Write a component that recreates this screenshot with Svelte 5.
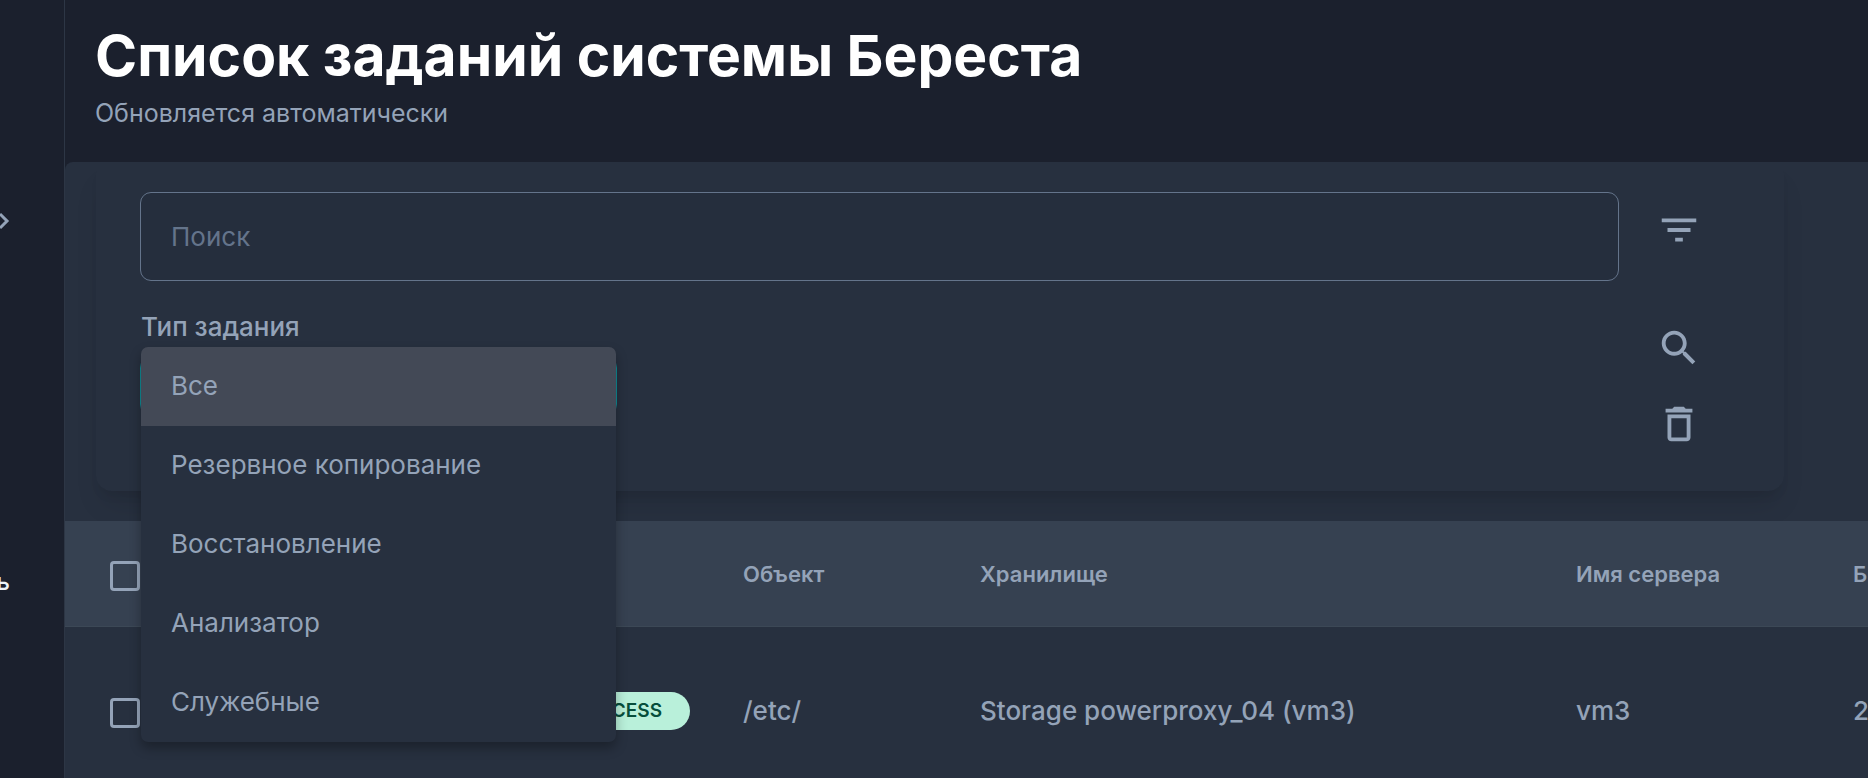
<script>
  const options = ['Все', 'Резервное копирование', 'Восстановление', 'Анализатор', 'Служебные'];
  let type = $state('Все');
  let query = $state('');
</script>

<div class="app">
  <aside class="sidebar">
    <button class="nav-item" aria-label="Развернуть">
      <svg viewBox="0 0 10 18" width="10" height="18" aria-hidden="true">
        <path d="M0 2 7 9 0 16" />
      </svg>
    </button>
    <span class="nav-text">ь</span>
  </aside>

  <main>
    <header>
      <h1>Список заданий системы Береста</h1>
      <p>Обновляется автоматически</p>
    </header>

    <section class="panel">
      <form class="filters" onsubmit={(e) => e.preventDefault()}>
        <div class="fields">
          <input class="search" type="text" placeholder="Поиск" aria-label="Поиск" bind:value={query} />
          <span class="label" id="type-label">Тип задания</span>
          <div class="select">
            <button type="button" class="select-box" aria-haspopup="listbox" aria-labelledby="type-label"></button>
            <div class="menu" role="listbox" aria-labelledby="type-label">
              {#each options as option}
                <button
                  type="button"
                  role="option"
                  aria-selected={option === type}
                  class:selected={option === type}
                  onclick={() => (type = option)}>{option}</button>
              {/each}
            </div>
          </div>
        </div>
        <div class="actions">
          <button type="button" class="filter" aria-label="Фильтр">
            <svg viewBox="0 0 24 24"><path d="M10 18h4v-2h-4v2zM3 6v2h18V6H3zm3 7h12v-2H6v2z" /></svg>
          </button>
          <button type="submit" aria-label="Найти">
            <svg viewBox="0 0 24 24"><path d="M15.5 14h-.79l-.28-.27C15.41 12.59 16 11.11 16 9.5 16 5.91 13.09 3 9.5 3S3 5.91 3 9.5 5.91 16 9.5 16c1.61 0 3.09-.59 4.23-1.57l.27.28v.79l5 4.99L20.49 19l-4.99-5zm-6 0C7.01 14 5 11.99 5 9.5S7.01 5 9.5 5 14 7.01 14 9.5 11.99 14 9.5 14z" /></svg>
          </button>
          <button type="reset" aria-label="Очистить">
            <svg viewBox="0 0 24 24"><path d="M6 19c0 1.1.9 2 2 2h8c1.1 0 2-.9 2-2V7H6v12zM8 9h8v10H8V9zm7.5-5-1-1h-5l-1 1H5v2h14V4h-3.5z" /></svg>
          </button>
        </div>
      </form>

      <table>
        <colgroup>
          <col class="c-check" /><col class="c-status" /><col class="c-object" />
          <col class="c-storage" /><col class="c-server" /><col />
        </colgroup>
        <thead>
          <tr>
            <th><input type="checkbox" aria-label="Выбрать все" /></th>
            <th></th>
            <th>Объект</th>
            <th>Хранилище</th>
            <th>Имя сервера</th>
            <th>Б</th>
          </tr>
        </thead>
        <tbody>
          <tr>
            <td><input type="checkbox" aria-label="Выбрать задание" /></td>
            <td class="status"><span class="badge">SUCCESS</span></td>
            <td>/etc/</td>
            <td>Storage powerproxy_04 (vm3)</td>
            <td>vm3</td>
            <td>2</td>
          </tr>
        </tbody>
      </table>
    </section>
  </main>
</div>

<style>
  :global(body) {
    margin: 0;
    background: #1b202d;
  }
  .app {
    display: flex;
    height: 100vh;
    overflow: hidden;
    background: #1b202d;
    color: #94a3b8;
    font-family: Inter, sans-serif;
    font-size: 26px;
    line-height: 40px;
  }
  button {
    margin: 0;
    border: 0;
    padding: 0;
    background: none;
    color: inherit;
    font: inherit;
    cursor: pointer;
  }
  .sidebar {
    flex: none;
    box-sizing: border-box;
    width: 65px;
    padding-top: 212px;
    border-right: 1px solid #2d3645;
    display: flex;
    flex-direction: column;
    align-items: flex-start;
    gap: 332px;
  }
  .nav-item svg {
    display: block;
    fill: none;
    stroke: #94a3b8;
    stroke-width: 3;
  }
  .nav-text {
    display: flex;
    justify-content: flex-end;
    width: 10px;
    color: #edf2f7;
    font-size: 24px;
    font-weight: 500;
  }
  main {
    flex: 1;
    min-width: 0;
  }
  header {
    padding: 20px 30px 28px;
  }
  h1 {
    margin: 0;
    color: #fff;
    font-size: 57px;
    font-weight: 700;
    line-height: 72px;
  }
  p {
    margin: 0;
    font-size: 25px;
    line-height: 42px;
  }
  .panel {
    border-radius: 8px 0 0 0;
    background: #27303f;
  }
  .filters {
    display: flex;
    gap: 34px;
    margin: 0 84px 30px 31px;
    padding: 30px 79px 41px 44px;
    border-radius: 16px;
    box-shadow:
      0 19px 28px -6px rgba(0, 0, 0, 0.1),
      0 8px 11px -4px rgba(0, 0, 0, 0.07);
  }
  .fields {
    flex: 1;
    display: flex;
    flex-direction: column;
  }
  .search {
    box-sizing: border-box;
    width: 100%;
    height: 89px;
    padding: 0 30px;
    border: 1px solid #64748b;
    border-radius: 11px;
    background: #252e3d;
    color: #94a3b8;
    font: inherit;
  }
  .search::placeholder {
    color: #64748b;
    opacity: 1;
  }
  .label {
    margin: 26px 0 6px 1px;
    font-weight: 500;
  }
  .select {
    position: relative;
    width: 477px;
  }
  .select-box {
    display: block;
    box-sizing: border-box;
    width: 100%;
    height: 66px;
    border: 1px solid #0e8c96;
    border-radius: 15px;
  }
  .menu {
    position: absolute;
    z-index: 2;
    top: -6px;
    left: 1px;
    right: 1px;
    display: flex;
    flex-direction: column;
    overflow: hidden;
    border-radius: 7px;
    background: #27303f;
    box-shadow: 0 6px 12px rgba(0, 0, 0, 0.3);
  }
  .menu button {
    height: 79px;
    padding: 0 30px 2px;
    text-align: left;
  }
  .menu .selected {
    background: #434956;
  }
  .actions {
    flex: none;
    width: 52px;
    display: flex;
    flex-direction: column;
    gap: 24px;
    padding-top: 12px;
  }
  .actions button {
    height: 52px;
    display: grid;
    place-items: center;
  }
  .actions .filter {
    margin-bottom: 42px;
  }
  .actions svg {
    width: 46px;
    height: 46px;
    fill: #94a3b8;
  }
  table {
    width: 100%;
    border-collapse: collapse;
    table-layout: fixed;
  }
  .c-check { width: 112px; }
  .c-status { width: 536px; }
  .c-object { width: 237px; }
  .c-storage { width: 596px; }
  .c-server { width: 277px; }
  th,
  td {
    padding: 0 0 0 30px;
    text-align: left;
    vertical-align: middle;
    font-weight: 500;
    white-space: nowrap;
  }
  th {
    height: 105px;
    border-bottom: 1px solid #3c4856;
    background: #364151;
    font-size: 22px;
    font-weight: 600;
  }
  td {
    height: 166px;
  }
  th:first-child,
  td:first-child {
    padding-left: 45px;
  }
  input[type='checkbox'] {
    appearance: none;
    display: block;
    box-sizing: border-box;
    width: 30px;
    height: 30px;
    margin: 4px 0 0;
    border: 3px solid #94a3b8;
    border-radius: 4px;
  }
  .status {
    padding-right: 23px;
    padding-bottom: 2px;
    text-align: right;
  }
  .badge {
    display: inline-block;
    padding: 0 28px;
    border-radius: 20px;
    background: #b9f0da;
    color: #064e3b;
    font-size: 19px;
    font-weight: 600;
    line-height: 38px;
    vertical-align: middle;
  }
</style>
